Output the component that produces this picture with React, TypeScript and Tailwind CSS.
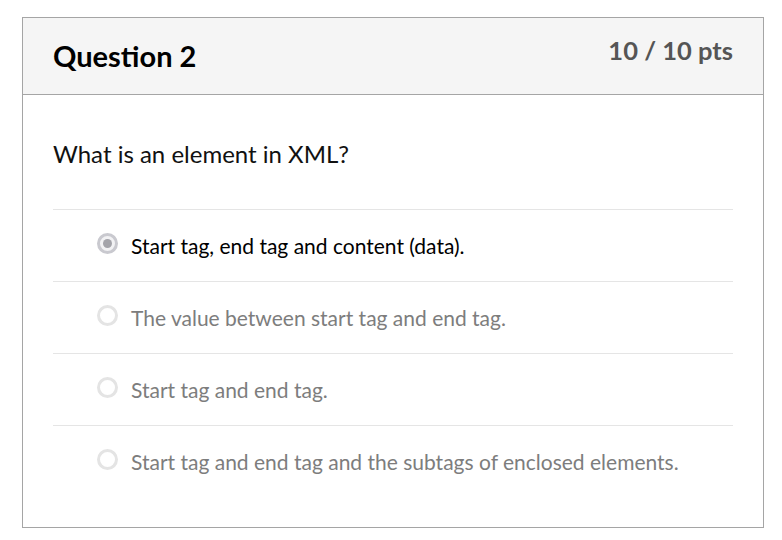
import React from "react";

const answers = [
  { text: "Start tag, end tag and content (data).", selected: true },
  { text: "The value between start tag and end tag.", selected: false },
  { text: "Start tag and end tag.", selected: false },
  { text: "Start tag and end tag and the subtags of enclosed elements.", selected: false },
];

export default function App() {
  return (
    <div className="w-[782px] h-[540px] bg-white pt-[17px] pl-[22px]" style={{ fontFamily: "Lato, 'Open Sans', sans-serif" }}>
      <div className="w-[742px] border border-[#a5a5a5]">
        <div className="h-[77px] bg-[#f5f5f5] border-b border-[#a5a5a5] flex items-start justify-between px-[30px]">
          <h2 className="text-[29px] font-bold text-black leading-none mt-[23px]">Question 2</h2>
          <div className="text-[25.5px] font-bold text-[#555555] leading-none mt-[20px]">10 / 10 pts</div>
        </div>
        <div className="px-[30px] pt-[43px] pb-[30px]">
          <p className="text-[24px] text-[#111111] leading-[32px] mb-[39px]">What is an element in XML?</p>
          {answers.map((a, i) => (
            <div key={i} className="h-[72px] border-t border-[#e5e5e5] flex items-center pl-[44px]">
              <span className={`w-[21px] h-[21px] rounded-full flex items-center justify-center mr-[13px] -mt-[4px] ${a.selected ? "border-[3px] border-[#c9c9cf] bg-[#f2f2f4]" : "border-[3px] border-[#e4e4e4]"}`}>
                {a.selected && <span className="w-[9px] h-[9px] rounded-full bg-[#a4a4aa]" />}
              </span>
              <span className={`text-[21px] ${a.selected ? "text-black" : "text-[#7d7d7d]"}`}>{a.text}</span>
            </div>
          ))}
        </div>
      </div>
    </div>
  );
}
